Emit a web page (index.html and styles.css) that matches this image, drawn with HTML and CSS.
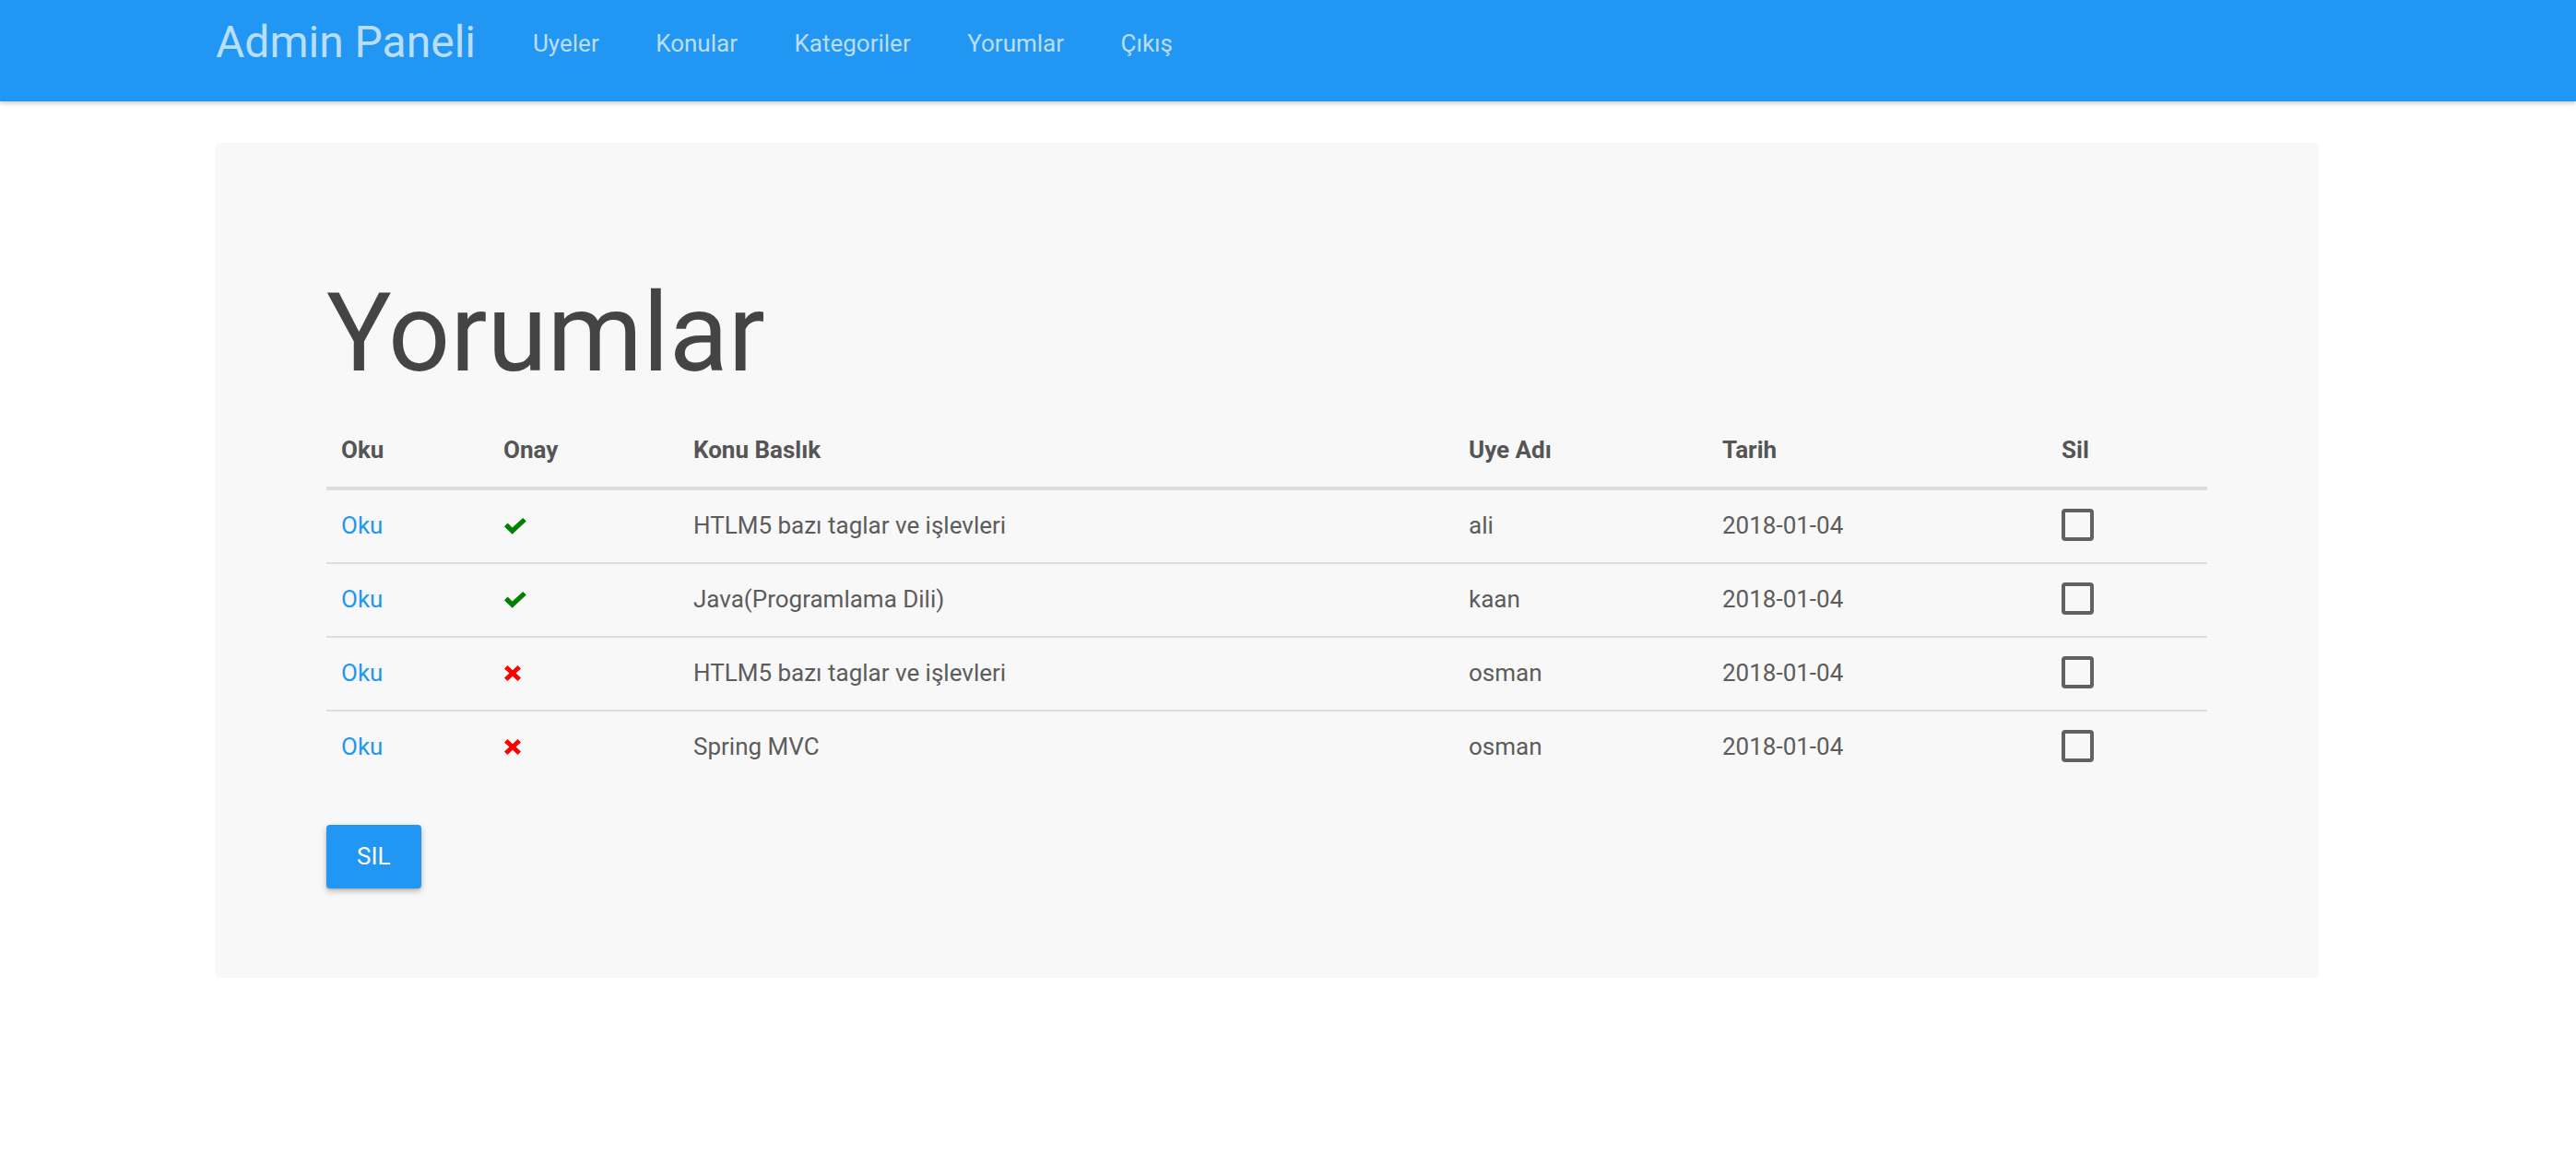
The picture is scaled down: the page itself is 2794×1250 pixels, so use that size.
FILE: index.html
```html
<!DOCTYPE html>
<html lang="tr">
<head>
<meta charset="utf-8">
<title>Admin Paneli - Yorumlar</title>
<link rel="stylesheet" href="styles.css">
</head>
<body>
<nav class="navbar">
  <a class="brand" href="#">Admin Paneli</a>
  <ul class="nav-links">
    <li><a href="#">Uyeler</a></li>
    <li><a href="#">Konular</a></li>
    <li><a href="#">Kategoriler</a></li>
    <li><a href="#">Yorumlar</a></li>
    <li><a href="#">Çıkış</a></li>
  </ul>
</nav>
<main class="jumbotron">
  <h1 class="title">Yorumlar</h1>
  <table class="grid">
    <colgroup>
      <col class="c-oku"><col class="c-onay"><col class="c-konu"><col class="c-uye"><col class="c-tarih"><col class="c-sil">
    </colgroup>
    <thead>
      <tr><th>Oku</th><th>Onay</th><th>Konu Baslık</th><th>Uye Adı</th><th>Tarih</th><th>Sil</th></tr>
    </thead>
    <tbody>
      <tr>
        <td><a class="read" href="#">Oku</a></td>
        <td><div class="icon-cell"><svg class="ok" viewBox="0 0 24 18"><polygon points="0,9.2 3.6,5.6 8.6,10.4 20.2,0 23.8,3.6 8.6,17.8"/></svg></div></td>
        <td>HTLM5 bazı taglar ve işlevleri</td>
        <td>ali</td>
        <td>2018-01-04</td>
        <td><span class="check"></span></td>
      </tr>
      <tr>
        <td><a class="read" href="#">Oku</a></td>
        <td><div class="icon-cell"><svg class="ok" viewBox="0 0 24 18"><polygon points="0,9.2 3.6,5.6 8.6,10.4 20.2,0 23.8,3.6 8.6,17.8"/></svg></div></td>
        <td>Java(Programlama Dili)</td>
        <td>kaan</td>
        <td>2018-01-04</td>
        <td><span class="check"></span></td>
      </tr>
      <tr>
        <td><a class="read" href="#">Oku</a></td>
        <td><div class="icon-cell"><svg class="no" viewBox="0 0 18 17"><polygon points="0,3.4 3.4,0 9,5.2 14.6,0 18,3.4 12.6,8.5 18,13.6 14.6,17 9,11.8 3.4,17 0,13.6 5.4,8.5"/></svg></div></td>
        <td>HTLM5 bazı taglar ve işlevleri</td>
        <td>osman</td>
        <td>2018-01-04</td>
        <td><span class="check"></span></td>
      </tr>
      <tr>
        <td><a class="read" href="#">Oku</a></td>
        <td><div class="icon-cell"><svg class="no" viewBox="0 0 18 17"><polygon points="0,3.4 3.4,0 9,5.2 14.6,0 18,3.4 12.6,8.5 18,13.6 14.6,17 9,11.8 3.4,17 0,13.6 5.4,8.5"/></svg></div></td>
        <td>Spring MVC</td>
        <td>osman</td>
        <td>2018-01-04</td>
        <td><span class="check"></span></td>
      </tr>
    </tbody>
  </table>
  <button class="btn" type="button">SIL</button>
</main>
</body>
</html>
```
FILE: styles.css
```css
* { box-sizing: border-box; }
html, body { margin: 0; padding: 0; background: #fff; }
body {
  font-family: Roboto, "Noto Sans", "Liberation Sans", sans-serif;
  font-size: 26px;
  color: #5c5c5c;
}

.navbar {
  height: 110px;
  background: #2196f3;
  display: flex;
  align-items: flex-start;
  gap: 62px;
  padding-left: 234px;
  box-shadow: 0 2px 5px rgba(0, 0, 0, 0.22);
  position: relative;
}
.brand {
  font-size: 48px;
  line-height: 48px;
  margin-top: 22px;
  color: rgba(255, 255, 255, 0.7);
  text-decoration: none;
}
.nav-links {
  list-style: none;
  margin: 0;
  padding: 0;
  display: flex;
  gap: 61.5px;
}
.nav-links a {
  display: block;
  font-size: 26px;
  line-height: 26px;
  margin-top: 34px;
  color: rgba(255, 255, 255, 0.7);
  text-decoration: none;
}

.jumbotron {
  margin: 45px 0 0 233px;
  width: 2282px;
  background: #f8f8f8;
  border-radius: 6px;
  padding: 96px 121px 97px 121px;
  overflow: hidden;
}
.title {
  font-size: 118px;
  font-weight: 400;
  line-height: 130px;
  color: #444;
  margin: 46px 0 23px 0;
}

.grid {
  width: 2040px;
  border-collapse: collapse;
  table-layout: fixed;
}
.c-oku { width: 176px; }
.c-onay { width: 206px; }
.c-konu { width: 841px; }
.c-uye { width: 275px; }
.c-tarih { width: 368px; }
.c-sil { width: 174px; }

.grid th {
  text-align: left;
  font-weight: 700;
  color: #555;
  line-height: 37px;
  padding: 20px 16px 21px;
  border-bottom: 4px solid #dcdcdc;
}
.grid td {
  line-height: 37px;
  padding: 20px 16px 21px;
  border-top: 2px solid #dddddd;
  vertical-align: top;
}
.read {
  color: #2196f3;
  text-decoration: none;
}
.icon-cell {
  height: 37px;
  display: flex;
  align-items: center;
}
.ok { width: 24px; height: 18px; fill: #008000; display: block; margin-left: 1px; }
.no { width: 18px; height: 17px; fill: #ff0000; display: block; margin-left: 1px; }
.check {
  display: block;
  width: 35px;
  height: 35px;
  border: 4px solid #616161;
  border-radius: 4px;
}

.btn {
  display: block;
  margin-top: 45px;
  font-family: Roboto, "Noto Sans", "Liberation Sans", sans-serif;
  font-size: 26px;
  line-height: 37px;
  padding: 16px 33px;
  border: 0;
  border-radius: 4px;
  background: #2196f3;
  color: #fff;
  box-shadow: 0 3px 6px rgba(0, 0, 0, 0.26), 0 1px 2px rgba(0, 0, 0, 0.12);
  cursor: pointer;
}
```
